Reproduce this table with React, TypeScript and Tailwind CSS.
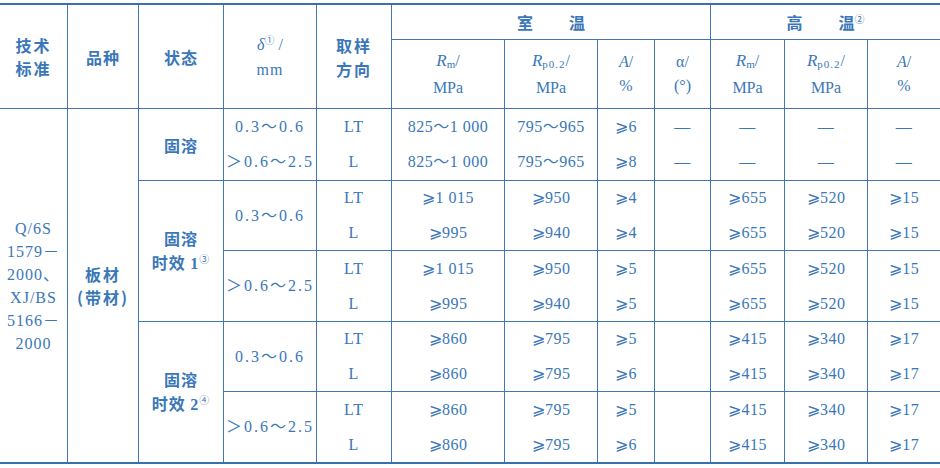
import React from "react";

const serif = "font-['Liberation_Serif','DejaVu_Serif','Noto_Sans_CJK_SC',serif]";
const hei = "font-['Noto_Sans_CJK_SC',sans-serif] font-semibold";

// cell base; borders are added per cell: border-l = left rule, border-t = top rule
const cell = "flex items-center justify-center text-center border-[#4077b4]";

type Row = { dir: string; vals: string[] };

const Sup = ({ children }: { children: React.ReactNode }) => (
  <span className="align-super text-[10px] leading-none font-normal">{children}</span>
);

const DataCells = ({ vals, top }: { vals: string[]; top: boolean }) => (
  <>
    {vals.map((v, i) => (
      <div
        key={i}
        className={`${cell} ${serif} border-l text-[16px] tracking-[0.5px] ${top ? "border-t" : ""}`}
      >
        {v}
      </div>
    ))}
  </>
);

const g1: Row[] = [
  { dir: "LT", vals: ["825～1 000", "795～965", "⩾6", "—", "—", "—", "—"] },
  { dir: "L", vals: ["825～1 000", "795～965", "⩾8", "—", "—", "—", "—"] },
];
const g2a: Row[] = [
  { dir: "LT", vals: ["⩾1 015", "⩾950", "⩾4", "", "⩾655", "⩾520", "⩾15"] },
  { dir: "L", vals: ["⩾995", "⩾940", "⩾4", "", "⩾655", "⩾520", "⩾15"] },
];
const g2b: Row[] = [
  { dir: "LT", vals: ["⩾1 015", "⩾950", "⩾5", "", "⩾655", "⩾520", "⩾15"] },
  { dir: "L", vals: ["⩾995", "⩾940", "⩾5", "", "⩾655", "⩾520", "⩾15"] },
];
const g3: Row[] = [
  { dir: "LT", vals: ["⩾860", "⩾795", "⩾5", "", "⩾415", "⩾340", "⩾17"] },
  { dir: "L", vals: ["⩾860", "⩾795", "⩾6", "", "⩾415", "⩾340", "⩾17"] },
];

const Thick = "0.3～0.6";
const Thin = "＞0.6～2.5";

const Dir = ({ d, top }: { d: string; top: boolean }) => (
  <div className={`${cell} ${serif} border-l text-[16px] tracking-[1px] ${top ? "border-t" : ""}`}>{d}</div>
);

const Range = ({ text, span, top }: { text: string; span: boolean; top: boolean }) => (
  <div
    className={`${cell} ${serif} border-l text-[16px] tracking-[2px] ${span ? "row-span-2" : ""} ${top ? "border-t" : ""}`}
  >
    {text}
  </div>
);

const Unit = ({ a, b }: { a: React.ReactNode; b: React.ReactNode }) => (
  <div className={`${cell} ${serif} flex-col border-l border-t text-[16px] leading-[24px]`}>
    <div>{a}</div>
    <div>{b}</div>
  </div>
);

const Rm = () => (
  <>
    <span className="italic text-[17px]">R</span>
    <span className="text-[11px] align-[-2px]">m</span>/
  </>
);

const Rp = () => (
  <>
    <span className="italic text-[17px]">R</span>
    <span className="text-[11px] align-[-2px] tracking-[1px]">p0.2</span>/
  </>
);

export default function App() {
  return (
    <div className="w-[940px] h-[468px] bg-white pt-[3px] text-[#3a77b8] overflow-hidden">
      <div className="grid grid-cols-[67px_71px_85px_93px_75px_113px_93px_57px_56px_74px_83px_73px] grid-rows-[34px_69px_36px_36px_35px_35px_36px_35px_35px_35px_36px_35px] border-t-2 border-b-2 border-[#3a70ae]">
        {/* header row 1 */}
        <div className={`${cell} ${hei} row-span-2 flex-col text-[16px] leading-[23px] tracking-[2px]`}>
          <div>技术</div>
          <div>标准</div>
        </div>
        <div className={`${cell} ${hei} row-span-2 border-l text-[16px] tracking-[1px]`}>品种</div>
        <div className={`${cell} ${hei} row-span-2 border-l text-[16px] tracking-[1px]`}>状态</div>
        <div className={`${cell} ${serif} row-span-2 flex-col border-l text-[16px] leading-[25px]`}>
          <div>
            <span className="italic">δ</span>
            <Sup>①</Sup>
            <span className="ml-[4px]">/</span>
          </div>
          <div className="tracking-[1px]">mm</div>
        </div>
        <div className={`${cell} ${hei} row-span-2 flex-col border-l text-[16px] leading-[24px] tracking-[2px]`}>
          <div>取样</div>
          <div>方向</div>
        </div>
        <div className={`${cell} ${hei} col-span-4 border-l gap-[36px] text-[16px]`}>
          <span>室</span>
          <span>温</span>
        </div>
        <div className={`${cell} ${hei} col-span-3 border-l gap-[36px] text-[16px]`}>
          <span>高</span>
          <span>
            温<Sup>②</Sup>
          </span>
        </div>

        {/* header row 2 */}
        <Unit a={<Rm />} b="MPa" />
        <Unit a={<Rp />} b="MPa" />
        <Unit a={<><span className="italic">A</span>/</>} b="%" />
        <Unit a="α/" b="(°)" />
        <Unit a={<Rm />} b="MPa" />
        <Unit a={<Rp />} b="MPa" />
        <Unit a={<><span className="italic">A</span>/</>} b="%" />

        {/* body: 固溶 */}
        <div className={`${cell} ${serif} row-span-10 flex-col border-t text-[16px] leading-[23px] tracking-[1px]`}>
          <div>Q/6S</div>
          <div>1579－</div>
          <div>2000、</div>
          <div>XJ/BS</div>
          <div>5166－</div>
          <div>2000</div>
        </div>
        <div className={`${cell} ${hei} row-span-10 flex-col border-l border-t text-[16px] leading-[23px] tracking-[2px]`}>
          <div>板材</div>
          <div>(带材)</div>
        </div>
        <div className={`${cell} ${hei} row-span-2 border-l border-t text-[16px] tracking-[1px]`}>固溶</div>
        <Range text={Thick} span={false} top />
        <Dir d={g1[0].dir} top />
        <DataCells vals={g1[0].vals} top />
        <Range text={Thin} span={false} top={false} />
        <Dir d={g1[1].dir} top={false} />
        <DataCells vals={g1[1].vals} top={false} />

        {/* 固溶时效 1 */}
        <div className={`${cell} ${hei} row-span-4 flex-col border-l border-t text-[16px] leading-[24px] tracking-[1px]`}>
          <div>固溶</div>
          <div>
            时效 <span className={serif}>1</span>
            <Sup>③</Sup>
          </div>
        </div>
        <Range text={Thick} span top />
        <Dir d="LT" top />
        <DataCells vals={g2a[0].vals} top />
        <Dir d="L" top={false} />
        <DataCells vals={g2a[1].vals} top={false} />
        <Range text={Thin} span top />
        <Dir d="LT" top />
        <DataCells vals={g2b[0].vals} top />
        <Dir d="L" top={false} />
        <DataCells vals={g2b[1].vals} top={false} />

        {/* 固溶时效 2 */}
        <div className={`${cell} ${hei} row-span-4 flex-col border-l border-t text-[16px] leading-[24px] tracking-[1px]`}>
          <div>固溶</div>
          <div>
            时效 <span className={serif}>2</span>
            <Sup>④</Sup>
          </div>
        </div>
        <Range text={Thick} span top />
        <Dir d="LT" top />
        <DataCells vals={g3[0].vals} top />
        <Dir d="L" top={false} />
        <DataCells vals={g3[1].vals} top={false} />
        <Range text={Thin} span top />
        <Dir d="LT" top />
        <DataCells vals={g3[0].vals} top />
        <Dir d="L" top={false} />
        <DataCells vals={g3[1].vals} top={false} />
      </div>
    </div>
  );
}
